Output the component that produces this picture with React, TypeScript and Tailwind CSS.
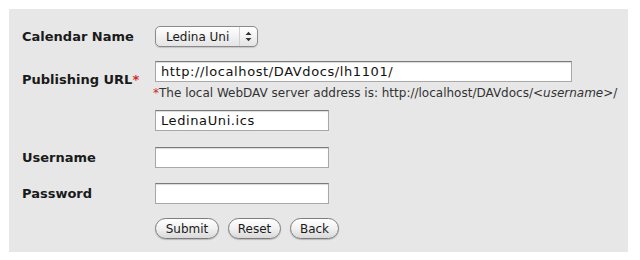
import React from "react";

const labelCls = "w-[133px] shrink-0 text-[13px] font-bold text-[#1a1a1a] [font-family:'DejaVu_Sans',sans-serif]";
const inputCls =
  "h-[21px] bg-white border border-[#a8a8a8] border-t-[#7a7a7a] shadow-[inset_0_1px_1px_rgba(0,0,0,0.15)] px-[5px] text-[13px] tracking-[0.6px] leading-[19px] text-[#111] [font-family:'DejaVu_Sans',sans-serif]";
const btnCls =
  "h-[21px] rounded-full border border-[#7d7d7d] bg-gradient-to-b from-[#ffffff] via-[#f1f1f1] to-[#d9d9d9] shadow-[0_1px_1px_rgba(0,0,0,0.2)] text-[12px] text-[#1a1a1a] [font-family:'DejaVu_Sans',sans-serif] flex items-center justify-center";

export default function App() {
  return (
    <div className="w-[640px] h-[260px] bg-white pt-[9px] pl-[9px]">
      <div className="w-[619px] h-[243px] bg-[#e7e7e7] pl-[13px] pt-[17px]">
        <div className="flex items-center h-[21px]">
          <div className={labelCls}>Calendar Name</div>
          <div className="h-[21px] w-[103px] rounded-[5px] border border-[#8a8a8a] bg-gradient-to-b from-[#ffffff] to-[#e4e4e4] shadow-[0_1px_1px_rgba(0,0,0,0.15)] flex items-center">
            <span className="pl-[10px] flex-1 text-[12px] text-[#1a1a1a] [font-family:'DejaVu_Sans',sans-serif]">Ledina Uni</span>
            <div className="w-[18px] h-full border-l border-[#d0d0d0] flex items-center justify-center">
              <svg width="7" height="11" viewBox="0 0 7 11">
                <path d="M0.5 4 L3.5 0.8 L6.5 4 Z" fill="#333" />
                <path d="M0.5 7 L3.5 10.2 L6.5 7 Z" fill="#333" />
              </svg>
            </div>
          </div>
        </div>

        <div className="flex mt-[14px]">
          <div className={labelCls + " pt-[9px] h-[21px]"}>
            Publishing URL<span className="text-[#d42a2a]">*</span>
          </div>
          <div className="flex flex-col">
            <div className={inputCls + " w-[417px]"}>http://localhost/DAVdocs/lh1101/</div>
            <div className="mt-[5px] ml-[-2px] text-[12px] leading-[13px] text-[#333] [font-family:'DejaVu_Sans',sans-serif]">
              <span className="text-[#d42a2a]">*</span>The local WebDAV server address is: http://localhost/DAVdocs/&lt;<i>username</i>&gt;/
            </div>
          </div>
        </div>

        <div className="flex mt-[10px]">
          <div className="w-[133px] shrink-0" />
          <div className={inputCls + " w-[174px]"}>LedinaUni.ics</div>
        </div>

        <div className="flex items-center mt-[16px]">
          <div className={labelCls}>Username</div>
          <div className={inputCls + " w-[174px]"}></div>
        </div>

        <div className="flex items-center mt-[15px]">
          <div className={labelCls}>Password</div>
          <div className={inputCls + " w-[174px]"}></div>
        </div>

        <div className="flex mt-[14px]">
          <div className="w-[133px] shrink-0" />
          <div className="flex gap-[9px]">
            <div className={btnCls + " w-[64px]"}>Submit</div>
            <div className={btnCls + " w-[53px]"}>Reset</div>
            <div className={btnCls + " w-[49px]"}>Back</div>
          </div>
        </div>
      </div>
    </div>
  );
}
